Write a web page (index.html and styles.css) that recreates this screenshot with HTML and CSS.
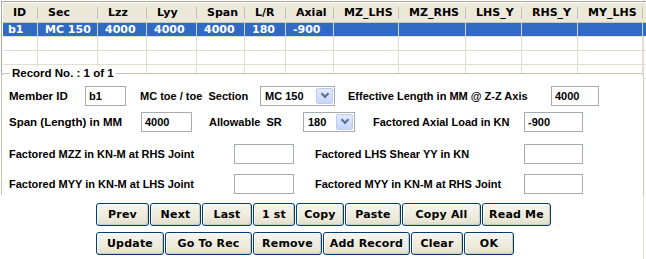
FILE: index.html
```html
<!DOCTYPE html>
<html lang="en">
<head>
	<meta charset="UTF-8">
	<title>Member Records</title>
	<link rel="stylesheet" href="styles.css">
</head>
<body>
	<div class="page">
		<div class="grid">
			<div class="row head">
				<div>ID</div><div>Sec</div><div>Lzz</div><div>Lyy</div><div>Span</div><div>L/R</div><div>Axial</div>
				<div>MZ_LHS</div><div>MZ_RHS</div><div>LHS_Y</div><div>RHS_Y</div><div>MY_LHS</div><div></div>
			</div>
			<div class="row sel">
				<div class="first">b1</div><div>MC 150</div><div>4000</div><div>4000</div><div>4000</div><div>180</div><div>-900</div>
				<div></div><div></div><div></div><div></div><div></div><div></div>
			</div>
			<div class="row">
				<div></div><div></div><div></div><div></div><div></div><div></div><div></div>
				<div></div><div></div><div></div><div></div><div></div><div></div>
			</div>
			<div class="row">
				<div></div><div></div><div></div><div></div><div></div><div></div><div></div>
				<div></div><div></div><div></div><div></div><div></div><div></div>
			</div>
			<div class="row">
				<div></div><div></div><div></div><div></div><div></div><div></div><div></div>
				<div></div><div></div><div></div><div></div><div></div><div></div>
			</div>
		</div>

		<fieldset class="record">
			<legend>Record No. : 1 of 1</legend>
			<div class="line one">
				<label class="w-member">Member ID</label>
				<input class="w-id" type="text" value="b1">
				<label class="w-section">MC toe / toe&nbsp; Section</label>
				<div class="combo w-sec"><span>MC 150</span><i></i></div>
				<label class="w-eff">Effective Length in MM @ Z-Z Axis</label>
				<input class="w-len" type="text" value="4000">
			</div>
			<div class="line two">
				<label class="w-span">Span (Length) in MM</label>
				<input class="w-spanval" type="text" value="4000">
				<label class="w-sr">Allowable&nbsp; SR</label>
				<div class="combo w-srval"><span>180</span><i></i></div>
				<label class="w-axial">Factored Axial Load in KN</label>
				<input class="w-axialval" type="text" value="-900">
			</div>
			<div class="line three">
				<label class="w-long">Factored MZZ in KN-M at RHS Joint</label>
				<input class="w-box" type="text">
				<label class="w-right">Factored LHS Shear YY in KN</label>
				<input class="w-box2" type="text">
			</div>
			<div class="line four">
				<label class="w-long">Factored MYY in KN-M at LHS Joint</label>
				<input class="w-box" type="text">
				<label class="w-right">Factored MYY in KN-M at RHS Joint</label>
				<input class="w-box2" type="text">
			</div>
		</fieldset>

		<div class="buttons">
			<div class="btnrow">
				<button style="width:53px">Prev</button>
				<button style="width:51px">Next</button>
				<button style="width:50px">Last</button>
				<button style="width:42px">1 st</button>
				<button style="width:48px">Copy</button>
				<button style="width:56px">Paste</button>
				<button style="width:79px">Copy All</button>
				<button style="width:69px">Read Me</button>
			</div>
			<div class="btnrow">
				<button style="width:68px">Update</button>
				<button style="width:87px">Go To Rec</button>
				<button style="width:69px">Remove</button>
				<button style="width:87px">Add Record</button>
				<button style="width:52px">Clear</button>
				<button style="width:50px">OK</button>
			</div>
		</div>
	</div>
</body>
</html>
```

FILE: styles.css
```css
html, body {
	margin: 0;
	padding: 0;
	background: #fff;
}
.page {
	width: 646px;
	height: 259px;
	overflow: hidden;
	background: linear-gradient(#e2ded2, #e2ded2) 643px 0 / 1px 100% no-repeat, #fff;
}
.grid {
	margin: 1px 0 0 1px;
	padding: 1px 0 0 1px;
	border-top: 1px solid #a9a89f;
	border-left: 1px solid #a9a89f;
	font-family: "DejaVu Sans", Verdana, sans-serif;
	font-weight: bold;
	font-size: 11px;
}
.row {
	display: grid;
	grid-template-columns: 35px 60px 49px 50px 48px 41px 48px 65px 67px 56px 56px 65px 1fr;
	height: 14px;
}
.row > div {
	box-sizing: border-box;
	border-right: 1px solid #e2ded2;
	border-bottom: 1px solid #e2ded2;
	padding-left: 7px;
	line-height: 13px;
	white-space: nowrap;
	overflow: hidden;
}
.row.head {
	height: 20px;
}
.row.head > div {
	padding-left: 10px;
	line-height: 19px;
	border-right: 0;
	border-bottom: 1px solid #cbc7b8;
	background: linear-gradient(#c7c3b4, #c7c3b4) right 4px / 1px 12px no-repeat, #ece9d8;
	color: #000;
}
.row.sel > div {
	background: #316ac5;
	color: #fff;
	border-right-color: #c9d6ee;
	border-bottom-color: #e2ded2;
}
.row.sel > .first {
	padding-left: 5px;
}

/* the frame sits over the last grid row, like the form control did */
.record {
	position: relative;
	margin: -13px 0 0 1px;
	padding: 0 0 1px 0;
	width: 643px;
	box-sizing: border-box;
	border: 1px solid #c9c6b6;
	border-bottom: 0;
	border-radius: 4px 4px 0 0;
	background: #fff;
	font-family: "Liberation Sans", Arial, sans-serif;
	font-weight: bold;
	font-size: 11px;
}
.record legend {
	margin-left: 8px;
	padding: 0 2px;
	line-height: 14px;
	font-size: 11.5px;
	background: #fff;
}
.line {
	display: flex;
	align-items: center;
	height: 21px;
	padding-left: 7px;
}
.line.one { margin-top: 5px; }
.line.two { margin-top: 5px; }
.line.three { margin-top: 11px; }
.line.four { margin-top: 9px; }
.line label {
	flex: none;
	white-space: nowrap;
}
.w-member, .w-span {
	font-size: 11.5px;
}
.line input, .combo {
	flex: none;
	box-sizing: border-box;
	height: 20px;
	margin: 0;
	padding: 0 0 0 3px;
	border: 1px solid #a5acb2;
	background: #fff;
	font: inherit;
	color: #000;
	outline: none;
}
.combo {
	display: flex;
	align-items: center;
	justify-content: space-between;
	padding: 1px 1px 1px 4px;
}
.combo i {
	width: 17px;
	height: 100%;
	box-sizing: border-box;
	border: 1px solid #bccdf2;
	border-radius: 2px;
	background: linear-gradient(#e3ebfc, #c6d6fa);
	display: flex;
	align-items: center;
	justify-content: center;
}
.combo i::after {
	content: "";
	width: 4px;
	height: 4px;
	border-right: 2px solid #5a6f96;
	border-bottom: 2px solid #5a6f96;
	transform: translateY(-2px) rotate(45deg);
}
.w-member { width: 76px; }
.w-id { width: 41px; }
.w-section { width: 120px; margin-left: 14px; }
.w-sec { width: 75px; }
.w-eff { width: 203px; margin-left: 13px; }
.w-len { width: 48px; }
.w-span { width: 132px; }
.w-spanval { width: 51px; }
.w-sr { width: 94px; margin-left: 17px; }
.w-srval { width: 52px; }
.w-axial { width: 151px; margin-left: 18px; }
.w-axialval { width: 59px; }
.w-long { width: 225px; }
.w-box { width: 60px; }
.w-right { width: 209px; margin-left: 21px; }
.w-box2 { width: 59px; }

.buttons {
	padding: 8px 0 0 96px;
}
.btnrow {
	display: flex;
	gap: 1px;
	height: 23px;
	margin-bottom: 6px;
}
.btnrow button {
	flex: none;
	height: 23px;
	margin: 0;
	padding: 0;
	border: 1px solid #003c74;
	border-radius: 3px;
	background: linear-gradient(#f6f5f0, #ece9d8 70%, #e1ddcd);
	box-shadow: inset 1px 1px 0 #fff, inset -1px -1px 0 #d0ccbd;
	font-family: "DejaVu Sans", Verdana, sans-serif;
	font-weight: bold;
	font-size: 11px;
	color: #000;
	letter-spacing: 0.2px;
}
```
